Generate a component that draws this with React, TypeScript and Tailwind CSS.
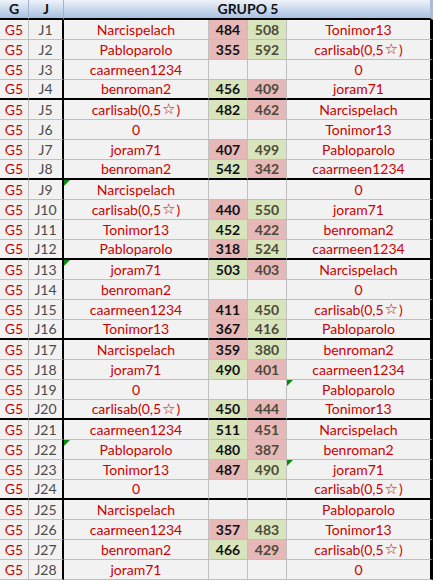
import React from "react";

type Row = {
  j: string;
  a: string;
  s1?: number;
  s2?: number;
  b: string;
  triA?: boolean;
  triB?: boolean;
};

const STAR = "STAR";

const rows: Row[] = [
  { j: "J1", a: "Narcispelach", s1: 484, s2: 508, b: "Tonimor13" },
  { j: "J2", a: "Pabloparolo", s1: 355, s2: 592, b: STAR },
  { j: "J3", a: "caarmeen1234", b: "0" },
  { j: "J4", a: "benroman2", s1: 456, s2: 409, b: "joram71" },
  { j: "J5", a: STAR, s1: 482, s2: 462, b: "Narcispelach" },
  { j: "J6", a: "0", b: "Tonimor13" },
  { j: "J7", a: "joram71", s1: 407, s2: 499, b: "Pabloparolo" },
  { j: "J8", a: "benroman2", s1: 542, s2: 342, b: "caarmeen1234" },
  { j: "J9", a: "Narcispelach", b: "0", triA: true },
  { j: "J10", a: STAR, s1: 440, s2: 550, b: "joram71" },
  { j: "J11", a: "Tonimor13", s1: 452, s2: 422, b: "benroman2" },
  { j: "J12", a: "Pabloparolo", s1: 318, s2: 524, b: "caarmeen1234" },
  { j: "J13", a: "joram71", s1: 503, s2: 403, b: "Narcispelach", triA: true },
  { j: "J14", a: "benroman2", b: "0" },
  { j: "J15", a: "caarmeen1234", s1: 411, s2: 450, b: STAR },
  { j: "J16", a: "Tonimor13", s1: 367, s2: 416, b: "Pabloparolo" },
  { j: "J17", a: "Narcispelach", s1: 359, s2: 380, b: "benroman2" },
  { j: "J18", a: "joram71", s1: 490, s2: 401, b: "caarmeen1234" },
  { j: "J19", a: "0", b: "Pabloparolo", triB: true },
  { j: "J20", a: STAR, s1: 450, s2: 444, b: "Tonimor13" },
  { j: "J21", a: "caarmeen1234", s1: 511, s2: 451, b: "Narcispelach" },
  { j: "J22", a: "Pabloparolo", s1: 480, s2: 387, b: "benroman2", triA: true },
  { j: "J23", a: "Tonimor13", s1: 487, s2: 490, b: "joram71", triB: true },
  { j: "J24", a: "0", b: STAR },
  { j: "J25", a: "Narcispelach", b: "Pabloparolo" },
  { j: "J26", a: "caarmeen1234", s1: 357, s2: 483, b: "Tonimor13" },
  { j: "J27", a: "benroman2", s1: 466, s2: 429, b: STAR },
  { j: "J28", a: "joram71", b: "0" },
];

const PINK = "bg-[#e6b8b7]";
const GREEN = "bg-[#d8e4bc]";

function Tri() {
  return (
    <span className="absolute left-0 top-0 w-0 h-0 border-t-[6px] border-t-[#0d8a0d] border-r-[6px] border-r-transparent" />
  );
}

function Name({ v }: { v: string }) {
  if (v === STAR) {
    return (
      <span className="flex items-center">
        carlisab(0,5
        <span className="text-[15px] leading-none text-[#c00000] font-bold mx-[1px]" style={{ fontFamily: "'DejaVu Sans', sans-serif" }}>
          {"\u2606"}
        </span>
        )
      </span>
    );
  }
  return <span>{v}</span>;
}

export default function App() {
  return (
    <div
      className="w-[433px] h-[581px] bg-white text-[14px] leading-none"
      style={{ fontFamily: "Lato, 'Liberation Sans', 'DejaVu Sans', sans-serif" }}
    >
      <div className="grid grid-cols-[29px_35px_145px_39px_39px_146px]">
        <div className="h-[20px] border-b-2 border-b-black border-r border-r-[#9fb3cf] bg-gradient-to-b from-[#eef3fa] to-[#a9c1e0] flex items-center justify-center font-bold text-[#111]">
          G
        </div>
        <div className="h-[20px] border-b-2 border-b-black border-r border-r-[#9fb3cf] bg-gradient-to-b from-[#eef3fa] to-[#a9c1e0] flex items-center justify-center font-bold text-[#111]">
          J
        </div>
        <div className="col-span-4 h-[20px] border-b-2 border-b-black border-r-[3px] border-r-[#a8bcd6] bg-gradient-to-b from-[#eef3fa] to-[#a9c1e0] flex items-center justify-center font-bold text-[#111] pl-[2px]">
          GRUPO 5
        </div>

        {rows.map((r, i) => {
          const groupEnd = (i + 1) % 4 === 0 && i !== rows.length - 1;
          const bb = groupEnd
            ? "border-b-2 border-b-black"
            : "border-b border-b-[#bfbfbf]";
          const has = r.s1 !== undefined && r.s2 !== undefined;
          const c1 = has ? ((r.s1 as number) > (r.s2 as number) ? GREEN : PINK) : "bg-[#f2f2f2]";
          const c2 = has ? ((r.s2 as number) > (r.s1 as number) ? GREEN : PINK) : "bg-[#f2f2f2]";
          return (
            <React.Fragment key={r.j}>
              <div className={`h-[20px] ${bb} border-r border-r-[#bfbfbf] bg-[#f2f2f2] flex items-center justify-center text-[#cc0000]`}>
                G5
              </div>
              <div className={`h-[20px] ${bb} border-r-2 border-r-black bg-[#f2f2f2] flex items-center justify-center text-[#4a4a4a]`}>
                {r.j}
              </div>
              <div className={`relative h-[20px] ${bb} border-r border-r-[#bfbfbf] bg-[#f2f2f2] flex items-center justify-center text-[#cc0000]`}>
                {r.triA && <Tri />}
                <Name v={r.a} />
              </div>
              <div className={`h-[20px] ${bb} border-r border-r-[#bfbfbf] ${c1} flex items-center justify-center font-bold text-[#111]`}>
                {r.s1 ?? ""}
              </div>
              <div className={`h-[20px] ${bb} border-r border-r-[#bfbfbf] ${c2} flex items-center justify-center font-bold text-[#4a4a3a]`}>
                {r.s2 ?? ""}
              </div>
              <div className={`relative h-[20px] ${bb} border-r-[3px] border-r-black bg-[#f2f2f2] flex items-center justify-center text-[#cc0000]`}>
                {r.triB && <Tri />}
                <Name v={r.b} />
              </div>
            </React.Fragment>
          );
        })}
      </div>
    </div>
  );
}
